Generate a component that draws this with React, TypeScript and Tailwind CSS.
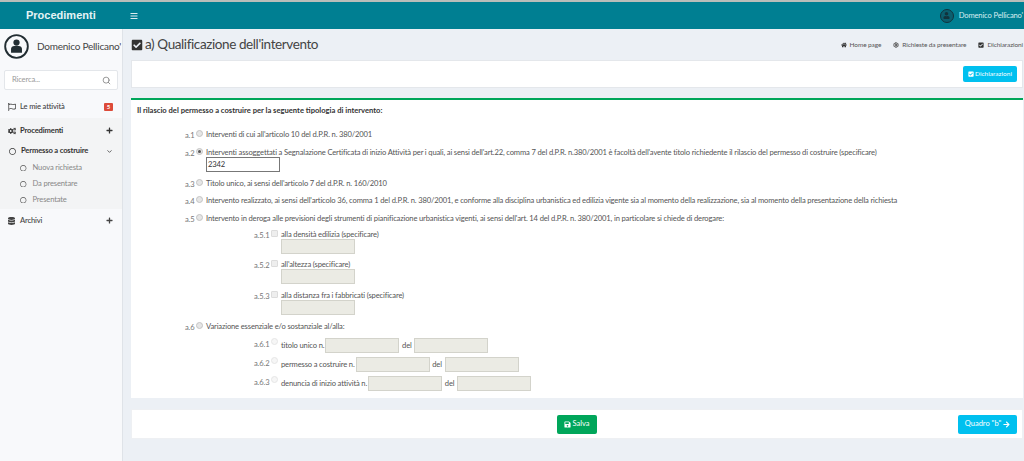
import { ChevronDown, Search, Settings } from 'lucide-react';
import { FaCheckSquare, FaCogs, FaHome, FaSave, FaArrowRight, FaRegCircle, FaBars, FaUser, FaRegFlag, FaDatabase, FaPlus } from 'react-icons/fa';

const Avatar = ({ size }: { size: number }) => (
  <svg width={size} height={size} viewBox="0 0 32 32" className="shrink-0">
    <circle cx="16" cy="16" r="14.5" fill="none" stroke="#222d32" strokeWidth="2.4" />
    <circle cx="16" cy="11" r="4" fill="#222d32" />
    <path d="M9 24v-5c0-2 2-3.5 4-3.5h6c2 0 4 1.500 4 3.500v5z" fill="#222d32" />
  </svg>
);

const Radio = ({ checked, faint }: { checked?: boolean; faint?: boolean }) => (
  <span className={`flex h-[7px] w-[7px] shrink-0 items-center justify-center rounded-full border ${faint ? 'border-[#e6e6e6] bg-[#f6f6f6]' : 'mt-[1px] border-[#c4c4c4] bg-[#e6e6e6]'}`}>
    {checked && <span className="h-[3px] w-[3px] rounded-full bg-[#555]" />}
  </span>
);

const Check = () => <span className="mt-[1px] h-[7px] w-[7px] shrink-0 rounded-[1px] border border-[#dcdcdc] bg-[#eeeeee]" />;

const Field = ({ className = 'w-[74px]' }: { className?: string }) => (
  <span className={`block h-[15px] shrink-0 border border-[#d3d3cb] bg-[#ebebe4] ${className}`} />
);

const Row = ({ label, className = '', children }: { label: string; className?: string; children: React.ReactNode }) => (
  <div className={`flex items-start pl-[48px] ${className}`}>
    <span className="mt-[1px] w-[10px] shrink-0 whitespace-nowrap text-[#777]">{label}</span>
    <span className="ml-[1px] mr-[3px] flex"><Radio checked={label === 'a.2'} /></span>
    <div className="min-w-0">{children}</div>
  </div>
);

const SubRow = ({ label, children }: { label: string; children: React.ReactNode }) => (
  <div className="flex items-start pl-[117px]">
    <span className="mt-[1px] w-[17px] shrink-0 whitespace-nowrap text-[#777]">{label}</span>
    {children}
  </div>
);

export default function App() {
  return (
    <div className="flex h-[461px] w-[1024px] flex-col overflow-hidden bg-[#ecf0f5] font-['Lato',sans-serif] text-[#333]">
      <header className="flex h-[29px] shrink-0 items-center border-t-2 border-[#b9bdb9] bg-[#007f92] text-white">
        <div className="w-[123px] pl-[26px] font-['Liberation_Sans',sans-serif] text-[11px] font-bold text-[#e4f3f5]">Procedimenti</div>
        <FaBars className="ml-[7px] h-[8px] w-[8px] text-[#dcecef]" />
        <div className="ml-auto flex items-center gap-[5px] pr-[1px]">
          <span className="flex h-[14px] w-[14px] items-center justify-center rounded-full border border-[#12333d] bg-[#0b5f6f]">
            <FaUser className="h-[7px] w-[7px] text-[#12333d]" />
          </span>
          <span className="whitespace-nowrap text-[7.600px] tracking-[-0.155px] text-[#d7eef1]">Domenico Pellicano'</span>
        </div>
      </header>

      <div className="flex min-h-0 flex-1">
        <aside className="w-[123px] shrink-0 border-r border-[#dfe3e8] bg-[#f8f9fb] text-[7.600px] tracking-[-0.155px]">
          <div className="flex items-center gap-[8px] pl-[4px] pt-[5px]">
            <Avatar size={25} />
            <span className="whitespace-nowrap text-[10px] tracking-[-0.24px] text-[#444]">Domenico Pellicano'</span>
          </div>
          <div className="mx-[4px] mt-[11px] flex h-[20px] items-center justify-between rounded-[2px] border border-[#e3e6ea] bg-white pl-[7px] pr-[6px] text-[#999]">
            <span>Ricerca...</span>
            <Search className="h-[9px] w-[9px] text-[#777]" />
          </div>
          <div className="mt-[6px] flex h-[22px] items-center pl-[8px] pr-[9px] text-[#444]">
            <FaRegFlag className="h-[8px] w-[8px]" />
            <span className="ml-[4px] font-medium">Le mie attività</span>
            <span className="ml-auto rounded-[1px] bg-[#dd4b39] px-[3px] text-[6px] font-bold leading-[8px] text-white">5</span>
          </div>
          <div className="bg-[#f3f4f5] pb-[1px]">
            <div className="flex h-[25px] items-center pl-[8px] pr-[9px] font-bold text-[#333]">
              <FaCogs className="h-[8px] w-[8px]" />
              <span className="ml-[4px]">Procedimenti</span>
              <FaPlus className="ml-auto h-[7px] w-[7px]" />
            </div>
            <div className="mt-[1px] flex h-[14px] items-center pl-[9px] pr-[9px] font-bold">
              <FaRegCircle className="h-[7px] w-[7px]" />
              <span className="ml-[5px]">Permesso a costruire</span>
              <ChevronDown strokeWidth={3} className="ml-auto h-[7px] w-[7px] text-[#555]" />
            </div>
            <div className="mt-[2px]">
              {['Nuova richiesta', 'Da presentare', 'Presentate'].map((item) => (
                <div key={item} className="flex h-[16px] items-center pl-[20px] text-[#888]">
                  <FaRegCircle className="h-[6.500px] w-[6.500px] text-[#555]" />
                  <span className="ml-[6px]">{item}</span>
                </div>
              ))}
            </div>
          </div>
          <div className="flex h-[23px] items-center pl-[8px] pr-[9px] font-medium text-[#444]">
            <FaDatabase className="h-[8px] w-[7px] text-[#444]" />
            <span className="ml-[5px]">Archivi</span>
            <FaPlus className="ml-auto h-[7px] w-[7px]" />
          </div>
        </aside>

        <main className="min-w-0 flex-1 pl-[8px] pr-[1px]">
          <div className="flex h-[31px] items-center">
            <FaCheckSquare className="h-[12px] w-[12px] text-[#333]" />
            <h1 className="ml-[2px] whitespace-nowrap text-[13.500px] font-normal tracking-[-0.4px] text-[#444]">a) Qualificazione dell'intervento</h1>
            <div className="ml-auto flex items-center whitespace-nowrap text-[6.500px] tracking-[-0.1px] text-[#555]">
              <FaHome className="mr-[3px] h-[6px] w-[6px] text-[#333]" />
              <span>Home page</span>
              <span className="w-[12px]" />
              <Settings className="mr-[3px] h-[6px] w-[6px]" strokeWidth={4} />
              <span>Richieste da presentare</span>
              <span className="w-[12px]" />
              <FaCheckSquare className="mr-[3px] h-[6px] w-[6px] text-[#333]" />
              <span>Dichiarazioni</span>
            </div>
          </div>

          <section className="flex h-[28px] items-center justify-end border border-[#e4e7eb] bg-white pr-[5px]">
            <button className="flex h-[16px] w-[54px] items-center justify-center gap-[1px] rounded-[2px] bg-[#00c0ef] text-[6.500px] text-white">
              <FaCheckSquare className="h-[6px] w-[6px]" />
              Dichiarazioni
            </button>
          </section>

          <section className="mt-[10px] h-[300px] border-t-2 border-[#00a65a] bg-white pl-[6px] text-[7.600px] leading-[11px] tracking-[-0.155px] text-[#555]">
            <p className="pt-[5px] font-bold tracking-normal text-[#333]">Il rilascio del permesso a costruire per la seguente tipologia di intervento:</p>
            <div className="mt-[13px] flex flex-col">
              <Row label="a.1"><span>Interventi di cui all'articolo 10 del d.P.R. n. 380/2001</span></Row>
              <Row label="a.2" className="mt-[6px]">
                <span className="block whitespace-nowrap">Interventi assoggettati a Segnalazione Certificata di inizio Attività per i quali, ai sensi dell'art.22, comma 7 del d.P.R. n.380/2001 è facoltà dell'avente titolo richiedente il rilascio del permesso di costruire (specificare)</span>
                <span className="-mt-[1px] block h-[15px] w-[74px] border border-[#777] bg-white pl-[1px] leading-[13px] text-[#333]">2342</span>
              </Row>
              <Row label="a.3" className="mt-[6px]"><span>Titolo unico, ai sensi dell'articolo 7 del d.P.R. n. 160/2010</span></Row>
              <Row label="a.4" className="mt-[5px]"><span className="whitespace-nowrap">Intervento realizzato, ai sensi dell'articolo 36, comma 1 del d.P.R. n. 380/2001, e conforme alla disciplina urbanistica ed edilizia vigente sia al momento della realizzazione, sia al momento della presentazione della richiesta</span></Row>
              <Row label="a.5" className="mt-[6px]"><span className="whitespace-nowrap">Intervento in deroga alle previsioni degli strumenti di pianificazione urbanistica vigenti, ai sensi dell'art. 14 del d.P.R. n. 380/2001, in particolare si chiede di derogare:</span></Row>

              {['alla densità edilizia (specificare)', "all'altezza (specificare)", 'alla distanza fra i fabbricati (specificare)'].map((text, i) => (
                <div key={text} className={i === 0 ? 'mt-[4px]' : i === 1 ? 'mt-[5px]' : 'mt-[6px]'}>
                  <SubRow label={`a.5.${i + 1}`}>
                    <span className="mr-[3px] flex"><Check /></span>
                    <div>
                      <span className="block whitespace-nowrap">{text}</span>
                      <Field className="-mt-[1px] w-[74px]" />
                    </div>
                  </SubRow>
                </div>
              ))}

              <Row label="a.6" className="mt-[6px]"><span>Variazione essenziale e/o sostanziale al/alla:</span></Row>
              <div className="mt-[5px] flex flex-col gap-[4px]">
                {[
                  ['a.6.1', 'titolo unico n.'],
                  ['a.6.2', 'permesso a costruire n.'],
                  ['a.6.3', 'denuncia di inizio attività n.'],
                ].map(([label, text]) => (
                  <SubRow key={label} label={label}>
                    <span className="mr-[3px] flex"><Radio faint /></span>
                    <div className="flex items-center whitespace-nowrap">
                      <span>{text}</span>
                      <Field className="ml-[1px] w-[74px]" />
                      <span className="mx-[2px] w-[11px] text-center">del</span>
                      <Field />
                    </div>
                  </SubRow>
                ))}
              </div>
            </div>
          </section>

          <section className="mt-[11px] flex h-[30px] items-center border border-[#eef0f3] bg-white pr-[5px]">
            <div className="ml-[425px] flex h-[19px] w-[40px] items-center justify-center gap-[1px] rounded-[2px] bg-[#00a65a] text-[7.500px] text-white">
              <FaSave className="h-[7px] w-[7px]" />
              Salva
            </div>
            <div className="ml-auto flex h-[19px] w-[59px] items-center justify-center gap-[2px] rounded-[2px] bg-[#00c0ef] text-[7.500px] text-white">
              Quadro "b"
              <FaArrowRight className="h-[7px] w-[7px]" />
            </div>
          </section>
        </main>
      </div>
    </div>
  );
}
